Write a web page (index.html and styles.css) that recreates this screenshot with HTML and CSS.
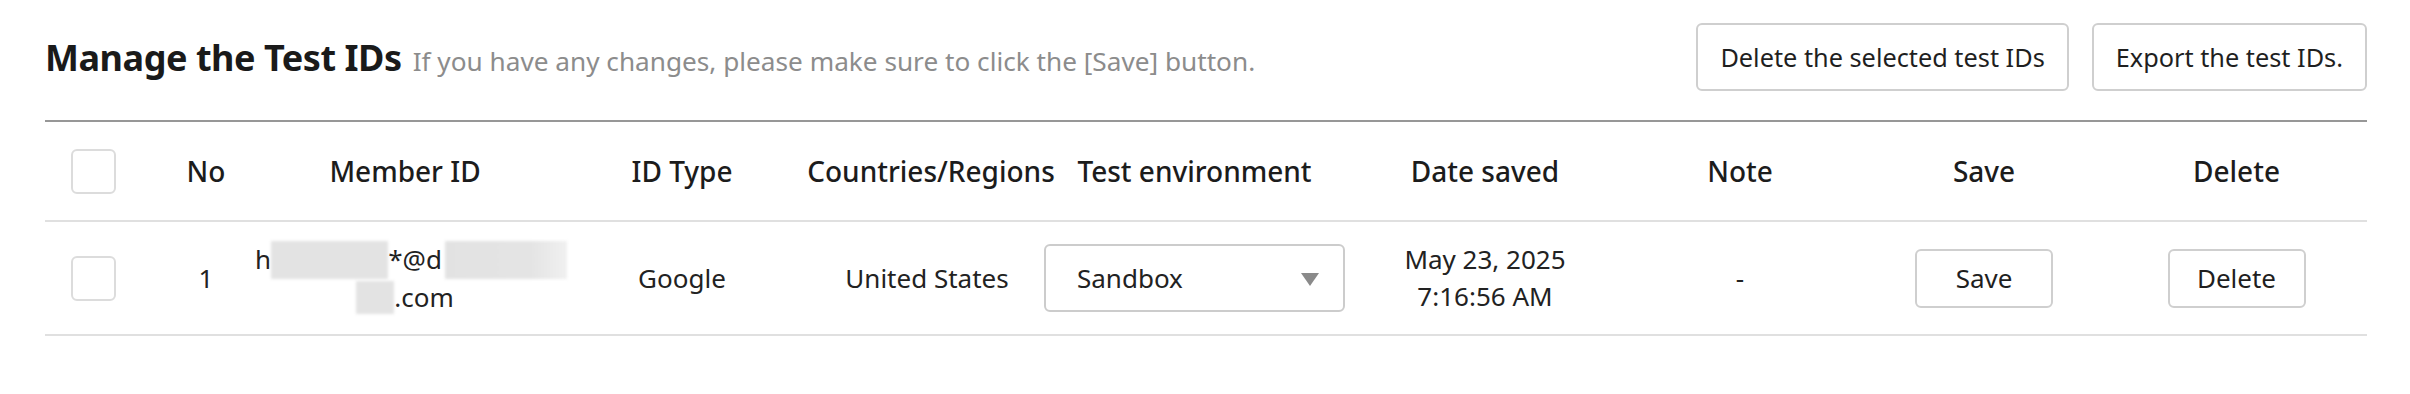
FILE: index.html
```html
<!DOCTYPE html>
<html lang="en">
<head>
<meta charset="utf-8">
<title>Manage the Test IDs</title>
<link rel="stylesheet" href="styles.css">
</head>
<body>
<div class="page">
  <div class="head">
    <div class="titles">
      <h1 class="title">Manage the Test IDs</h1>
      <span class="hint">If you have any changes, please make sure to click the [Save] button.</span>
    </div>
    <div class="actions">
      <button class="btn btn-top">Delete the selected test IDs</button>
      <button class="btn btn-top">Export the test IDs.</button>
    </div>
  </div>

  <div class="table">
    <div class="row row-head">
      <div class="cell"><span class="check"></span></div>
      <div class="cell">No</div>
      <div class="cell">Member ID</div>
      <div class="cell">ID Type</div>
      <div class="cell">Countries/Regions</div>
      <div class="cell">Test environment</div>
      <div class="cell">Date saved</div>
      <div class="cell">Note</div>
      <div class="cell">Save</div>
      <div class="cell">Delete</div>
    </div>
    <div class="row row-body">
      <div class="cell"><span class="check"></span></div>
      <div class="cell">1</div>
      <div class="cell stack">
        <span class="line line-first">h<span class="mask mask-a"></span>*@d<span class="mask mask-b"></span></span>
        <span class="line"><span class="mask mask-c"></span>.com</span>
      </div>
      <div class="cell">Google</div>
      <div class="cell cell-country">United States</div>
      <div class="cell">
        <div class="select">
          <span>Sandbox</span>
          <svg class="caret" width="18" height="13" viewBox="0 0 18 13"><path d="M0 0H18L9 13Z" fill="#8a8a8a"/></svg>
        </div>
      </div>
      <div class="cell stack">
        <span class="line">May 23, 2025</span>
        <span class="line">7:16:56 AM</span>
      </div>
      <div class="cell">-</div>
      <div class="cell"><button class="btn btn-row">Save</button></div>
      <div class="cell"><button class="btn btn-row">Delete</button></div>
    </div>
  </div>
</div>
</body>
</html>
```

FILE: styles.css
```css
* { box-sizing: border-box; }

html, body {
  margin: 0;
  background: #ffffff;
}

body {
  font-family: "Noto Sans", "Open Sans", sans-serif;
  color: #222222;
}

.page {
  padding: 23px 43px 0 45px;
}

.head {
  display: flex;
  align-items: center;
  justify-content: space-between;
  height: 68px;
  margin-bottom: 29px;
}

.titles {
  display: flex;
  align-items: baseline;
  gap: 11px;
}

.title {
  margin: 0;
  font-size: 36px;
  font-weight: 700;
  color: #1a1a1a;
  letter-spacing: -0.45px;
}

.hint {
  font-size: 26.2px;
  color: #8c8c8c;
}

.actions {
  display: flex;
  gap: 23px;
}

.btn {
  font-family: "Noto Sans", "Open Sans", sans-serif;
  background: #ffffff;
  color: #1f1f1f;
  border: 2px solid #cfcfcf;
  border-radius: 6px;
  cursor: pointer;
}

.btn-top {
  height: 68px;
  padding: 0 22px;
  font-size: 25.3px;
}

.btn-row {
  width: 138px;
  height: 59px;
  font-size: 26px;
  padding: 0;
}

.table {
  border-top: 2px solid #979797;
  border-bottom: 2px solid #e0e0e0;
}

.row {
  display: grid;
  grid-template-columns: 96px 130px 268px 286px 212px 315px 266px 244px 244px 261px;
}

.row-head {
  height: 100px;
  border-bottom: 2px solid #e0e0e0;
  font-size: 28px;
  font-weight: 500;
  color: #1c1c1c;
}

.row-body {
  height: 112px;
  font-size: 26px;
  color: #222222;
}

.cell {
  display: flex;
  align-items: center;
  justify-content: center;
  white-space: nowrap;
  min-width: 0;
}

.cell-country {
  padding-right: 8px;
}

.stack {
  flex-direction: column;
  line-height: 37px;
}

.line {
  display: flex;
  align-items: center;
  white-space: nowrap;
}

.line-first {
  padding-left: 12px;
}

.check {
  display: block;
  width: 45px;
  height: 45px;
  border: 2px solid #dcdcdc;
  border-radius: 6px;
  background: #ffffff;
}

.mask {
  display: inline-block;
  background: #e3e3e3;
  filter: blur(1.5px);
}

.mask-a {
  width: 117px;
  height: 38px;
}

.mask-b {
  width: 122px;
  height: 38px;
  margin-left: 3px;
  background: linear-gradient(90deg, #e2e2e2 0%, #e4e4e4 70%, #f0f0f0 100%);
}

.mask-c {
  width: 38px;
  height: 33px;
}

.select {
  width: 301px;
  height: 68px;
  border: 2px solid #cccccc;
  border-radius: 6px;
  display: flex;
  align-items: center;
  justify-content: space-between;
  padding: 0 24px 0 31px;
  font-size: 26px;
  color: #222222;
  background: #ffffff;
}

.caret {
  display: block;
  margin-top: 2px;
}
```
